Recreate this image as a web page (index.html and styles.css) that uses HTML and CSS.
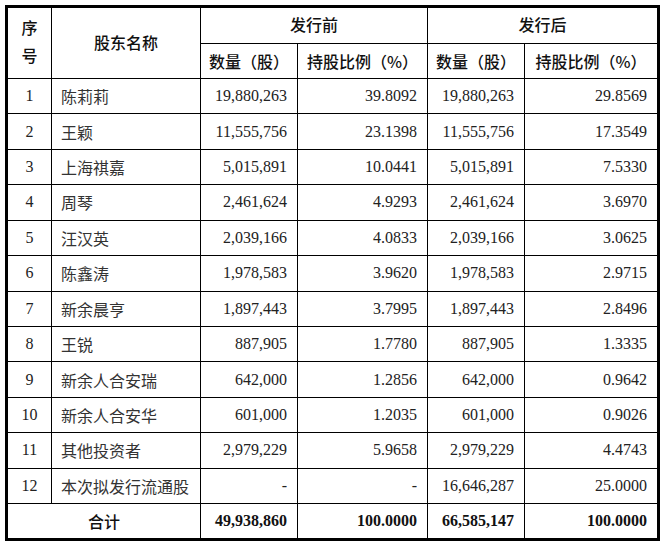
FILE: index.html
```html
<!DOCTYPE html>
<html lang="zh-CN">
<head>
<meta charset="utf-8">
<link rel="stylesheet" href="styles.css">
</head>
<body>
<div class="frame">
  <div class="grid">
    <div class="c hd seq">序<br>号</div>
    <div class="c hd name">股东名称</div>
    <div class="c hd grp">发行前</div>
    <div class="c hd grp">发行后</div>
    <div class="c hd">数量（股）</div>
    <div class="c hd">持股比例（%）</div>
    <div class="c hd">数量（股）</div>
    <div class="c hd">持股比例（%）</div>

    <div class="c no">1</div><div class="c nm">陈莉莉</div><div class="c num">19,880,263</div><div class="c num">39.8092</div><div class="c num">19,880,263</div><div class="c num">29.8569</div>
    <div class="c no">2</div><div class="c nm">王颖</div><div class="c num">11,555,756</div><div class="c num">23.1398</div><div class="c num">11,555,756</div><div class="c num">17.3549</div>
    <div class="c no">3</div><div class="c nm">上海祺嘉</div><div class="c num">5,015,891</div><div class="c num">10.0441</div><div class="c num">5,015,891</div><div class="c num">7.5330</div>
    <div class="c no">4</div><div class="c nm">周琴</div><div class="c num">2,461,624</div><div class="c num">4.9293</div><div class="c num">2,461,624</div><div class="c num">3.6970</div>
    <div class="c no">5</div><div class="c nm">汪汉英</div><div class="c num">2,039,166</div><div class="c num">4.0833</div><div class="c num">2,039,166</div><div class="c num">3.0625</div>
    <div class="c no">6</div><div class="c nm">陈鑫涛</div><div class="c num">1,978,583</div><div class="c num">3.9620</div><div class="c num">1,978,583</div><div class="c num">2.9715</div>
    <div class="c no">7</div><div class="c nm">新余晨亨</div><div class="c num">1,897,443</div><div class="c num">3.7995</div><div class="c num">1,897,443</div><div class="c num">2.8496</div>
    <div class="c no">8</div><div class="c nm">王锐</div><div class="c num">887,905</div><div class="c num">1.7780</div><div class="c num">887,905</div><div class="c num">1.3335</div>
    <div class="c no">9</div><div class="c nm">新余人合安瑞</div><div class="c num">642,000</div><div class="c num">1.2856</div><div class="c num">642,000</div><div class="c num">0.9642</div>
    <div class="c no">10</div><div class="c nm">新余人合安华</div><div class="c num">601,000</div><div class="c num">1.2035</div><div class="c num">601,000</div><div class="c num">0.9026</div>
    <div class="c no">11</div><div class="c nm">其他投资者</div><div class="c num">2,979,229</div><div class="c num">5.9658</div><div class="c num">2,979,229</div><div class="c num">4.4743</div>
    <div class="c no">12</div><div class="c nm">本次拟发行流通股</div><div class="c num">-</div><div class="c num">-</div><div class="c num">16,646,287</div><div class="c num">25.0000</div>

    <div class="c hd total-label">合计</div><div class="c num b">49,938,860</div><div class="c num b">100.0000</div><div class="c num b">66,585,147</div><div class="c num b">100.0000</div>
  </div>
</div>
</body>
</html>
```

FILE: styles.css
```css
html, body {
  margin: 0;
  padding: 0;
  background: #fff;
}
body {
  padding: 5px 0 0 5px;
}
.frame {
  width: 649px;
  border: 3px solid #000;
  background: #000;
}
.grid {
  display: grid;
  grid-template-columns: 43px 148px 96px 129px 96px 132px;
  grid-template-rows: 35px 34px repeat(12, 1fr) 34px;
  height: 530px;
  gap: 1px;
  background: #000;
}
.c {
  background: #fff;
  display: flex;
  align-items: center;
  font-family: "Liberation Serif", "Noto Sans CJK SC", serif;
  font-size: 16px;
  color: #222;
  line-height: 1;
}
.hd {
  justify-content: center;
  font-family: "Noto Sans CJK SC", sans-serif;
  font-weight: 500;
  color: #111;
  font-size: 16px;
}
.seq {
  grid-row: 1 / span 2;
  line-height: 28px;
  text-align: center;
  padding-bottom: 4px;
}
.name {
  grid-row: 1 / span 2;
  padding-bottom: 2px;
}
.grp {
  grid-column: span 2;
  padding-bottom: 3px;
}
.no {
  justify-content: center;
}
.nm {
  padding-left: 9px;
  font-family: "Noto Sans CJK SC", sans-serif;
  color: #333;
}
.num {
  justify-content: flex-end;
  padding-right: 10px;
}
.b {
  font-weight: bold;
  color: #111;
}
.total-label {
  grid-column: span 2;
}
```
